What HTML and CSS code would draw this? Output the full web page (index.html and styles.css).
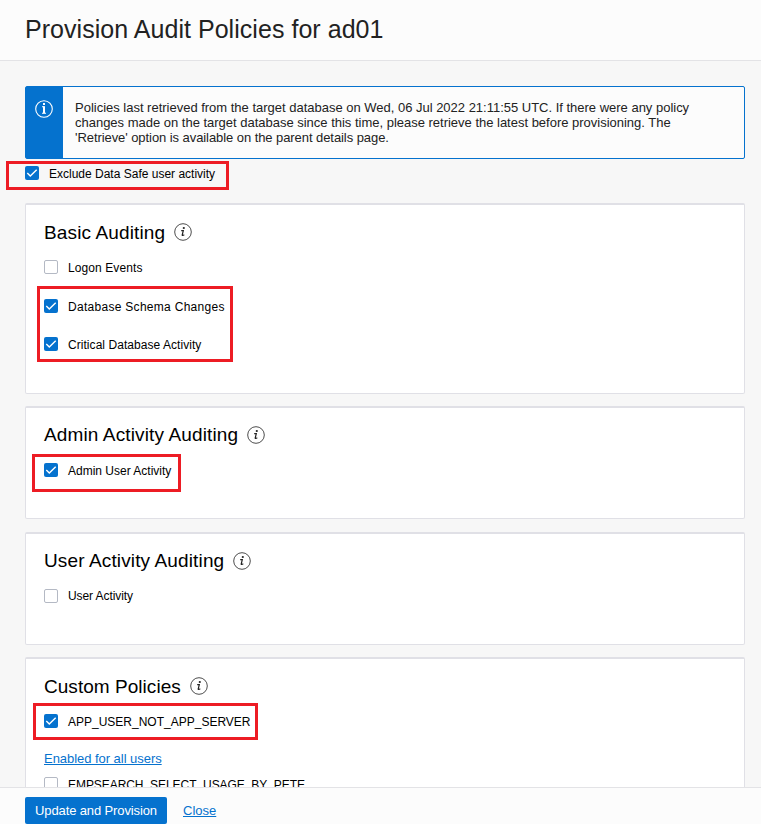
FILE: index.html
```html
<!DOCTYPE html>
<html lang="en">
<head>
<meta charset="utf-8">
<title>Provision Audit Policies</title>
<link rel="stylesheet" href="styles.css">
</head>
<body>
<svg class="defs" width="0" height="0" aria-hidden="true">
  <symbol id="info" viewBox="0 0 18 18">
    <circle cx="9" cy="9" r="8.3" fill="none" stroke="#4d4d4d" stroke-width="1"/>
    <circle cx="9.8" cy="5" r="1.1" fill="#222"/>
    <path d="M7.2 7.7H9.3L8.2 12.1Q8.3 12.8 10.3 11.7" fill="none" stroke="#222" stroke-width="1.2"/>
  </symbol>
  <symbol id="tick" viewBox="0 0 14 14">
    <path d="M2.3 7.1 5.3 10.1 11.7 3.7" fill="none" stroke="#fff" stroke-width="1.4"/>
  </symbol>
</svg>
<div class="dialog">
  <header class="header"><h1>Provision Audit Policies for ad01</h1></header>
  <main class="content">
    <div class="banner">
      <div class="banner-side">
        <svg width="18" height="18" viewBox="0 0 18 18"><circle cx="9" cy="9" r="8.3" fill="none" stroke="#fff" stroke-width="1.1"/><rect x="8" y="3" width="2" height="2" fill="#fff"/><path d="M7 6.7H9V13.2M7 13.2H11" fill="none" stroke="#fff" stroke-width="1.1"/><rect x="8" y="6.3" width="2" height="7" fill="#fff"/></svg>
      </div>
      <p class="banner-text"><span class="l1">Policies last retrieved from the target database on Wed, 06 Jul 2022 21:11:55 UTC. If there were any policy</span><br><span class="l2">changes made on the target database since this time, please retrieve the latest before provisioning. The</span><br><span class="l3">'Retrieve' option is available on the parent details page.</span></p>
    </div>
    <div class="option exclude"><span class="box on"><svg><use href="#tick"/></svg></span><span>Exclude Data Safe user activity</span><i class="mark mark-exclude"></i></div>

    <section class="card basic">
      <h2><span>Basic Auditing</span><svg class="info"><use href="#info"/></svg></h2>
      <div class="option"><span class="box"></span><span class="t-logon">Logon Events</span></div>
      <div class="option schema"><span class="box on"><svg><use href="#tick"/></svg></span><span class="t-schema">Database Schema Changes</span><i class="mark mark-basic"></i></div>
      <div class="option critical"><span class="box on"><svg><use href="#tick"/></svg></span><span class="t-critical">Critical Database Activity</span></div>
    </section>

    <section class="card admin">
      <h2><span>Admin Activity Auditing</span><svg class="info"><use href="#info"/></svg></h2>
      <div class="option"><span class="box on"><svg><use href="#tick"/></svg></span><span>Admin User Activity</span><i class="mark mark-admin"></i></div>
    </section>

    <section class="card user">
      <h2><span>User Activity Auditing</span><svg class="info"><use href="#info"/></svg></h2>
      <div class="option"><span class="box"></span><span class="t-user">User Activity</span></div>
    </section>

    <section class="card custom">
      <h2><span>Custom Policies</span><svg class="info"><use href="#info"/></svg></h2>
      <div class="option"><span class="box on"><svg><use href="#tick"/></svg></span><span>APP_USER_NOT_APP_SERVER</span><i class="mark mark-custom"></i></div>
      <a class="enabled" href="#">Enabled for all users</a>
      <div class="option emp"><span class="box"></span><span class="t-emp">EMPSEARCH_SELECT_USAGE_BY_PETE</span></div>
    </section>
  </main>
  <footer class="footer">
    <button class="primary" type="button">Update and Provision</button>
    <a class="close" href="#">Close</a>
  </footer>
</div>
</body>
</html>
```
FILE: styles.css
```css
* { box-sizing: border-box; }
body { margin: 0; background: #f7f7f7; color: #000; font: 12px/14px "Liberation Sans", Arial, sans-serif; }
.defs { display: block; }
.dialog { height: 824px; display: flex; flex-direction: column; overflow: hidden; }
.header { flex: none; height: 61px; padding: 15px 25px 0; background: #fcfcfc; border-bottom: 1px solid #e3e3e6; }
h1 { margin: 0; font-size: 25px; line-height: 29px; font-weight: 400; letter-spacing: 0.04px; color: #222; white-space: nowrap; }
.content { flex: 1; min-height: 0; overflow: hidden; padding: 25px 16px 0 25px; }
.banner { display: flex; height: 73px; border: 1px solid #0572ce; border-radius: 2px; background: #fcfcfc; }
.banner-side { width: 37px; background: #0572ce; padding: 13px 0 0 9px; }
.banner-side svg { display: block; }
.banner-text { margin: 0; padding: 13px 0 0 12px; font-size: 13px; line-height: 15px; color: #222; white-space: nowrap; }
.l1, .l2 { letter-spacing: -0.01px; }
.l3 { letter-spacing: -0.07px; }
.option { position: relative; display: flex; align-items: center; gap: 10px; height: 14px; white-space: nowrap; }
.option > span:nth-child(2) { padding-top: 2px; }
.box { flex: none; width: 14px; height: 14px; border: 1px solid #b4b9c4; border-radius: 2px; background: #fff; }
.box.on { border: 0; background: #0572ce; }
.box svg { display: block; width: 14px; height: 14px; }
.exclude { margin-top: 7px; }
.t-logon { letter-spacing: 0.09px; }
.t-schema { letter-spacing: 0.29px; }
.t-critical { letter-spacing: 0.05px; }
.t-user { letter-spacing: -0.08px; }
.t-emp { letter-spacing: -0.06px; }
.mark { position: absolute; border: 3px solid #ed1c24; }
.mark-exclude { left: -19px; top: -5px; width: 223px; height: 29px; }
.mark-basic { left: -7px; top: -13px; width: 196px; height: 76px; }
.mark-admin { left: -12px; top: -9px; width: 149px; height: 38px; }
.mark-custom { left: -11px; top: -11px; width: 225px; height: 37px; }
.card { border: 1px solid #e0e0e6; border-top-width: 2px; border-radius: 2px; background: #fff; padding: 16px 18px 0; }
.basic { height: 191px; margin-top: 23px; }
.admin { height: 113px; margin-top: 12px; }
.user { height: 113px; margin-top: 13px; }
.custom { height: 170px; margin-top: 12px; }
h2 { display: flex; align-items: center; gap: 9px; height: 22px; margin: 0 0 17px; font-size: 19px; line-height: 22px; font-weight: 400; letter-spacing: 0.13px; }
.basic h2 span, .custom h2 span { padding-top: 2px; }
.custom h2 { letter-spacing: 0.04px; }
.info { width: 18px; height: 18px; }
.user .option > span:nth-child(2) { padding-top: 0; }
.schema { margin-top: 25px; }
.critical { margin-top: 24px; }
.enabled { display: block; width: max-content; margin-top: 23px; font-size: 13px; line-height: 16px; letter-spacing: -0.04px; color: #0572ce; }
.emp { margin-top: 10px; }
.footer { flex: none; height: 37px; border-top: 1px solid #e3e3e6; background: #fcfcfc; display: flex; gap: 16px; padding: 9px 25px 0; font-size: 13px; line-height: 27px; }
.primary { width: 142px; height: 27px; border: 0; border-radius: 2px; padding: 0; background: #0572ce; color: #fff; font: 13px/27px "Liberation Sans", Arial, sans-serif; letter-spacing: -0.12px; white-space: nowrap; }
.close { color: #0572ce; }
```
